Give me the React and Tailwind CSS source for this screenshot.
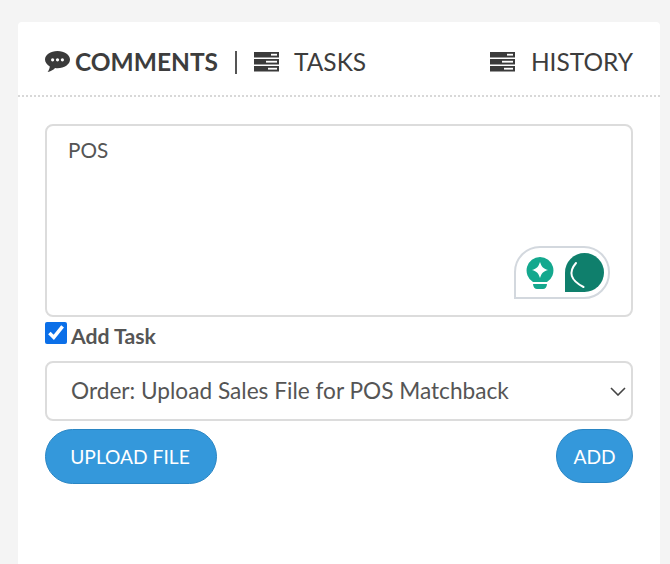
import React from 'react';

const ListIcon = () => (
    <svg width="25" height="20" viewBox="0 0 25 20" className="shrink-0">
        <rect x="0" y="0" width="25" height="5.5" fill="#3a3a3a" />
        <rect x="0" y="7" width="25" height="5.5" fill="#3a3a3a" />
        <rect x="0" y="14" width="25" height="5.5" fill="#3a3a3a" />
        <rect x="17" y="1.8" width="6" height="1.8" fill="#fff" />
        <rect x="12" y="8.8" width="11" height="1.8" fill="#fff" />
        <rect x="14" y="15.8" width="9" height="1.8" fill="#fff" />
    </svg>
);

const CommentIcon = () => (
    <svg width="25" height="22" viewBox="0 0 25 22" className="shrink-0">
        <path d="M12.5 0C5.6 0 0 3.8 0 8.6c0 2.8 1.9 5.2 4.8 6.8-.2 1.8-.9 3.8-2.2 5.6 2.9-.4 5.6-1.9 7.5-3.9.8.1 1.6.2 2.4.2 6.9 0 12.5-3.9 12.5-8.7S19.4 0 12.5 0z" fill="#3a3a3a" />
        <circle cx="7.6" cy="8.8" r="1.6" fill="#fff" />
        <circle cx="12.5" cy="8.8" r="1.6" fill="#fff" />
        <circle cx="17.4" cy="8.8" r="1.6" fill="#fff" />
    </svg>
);

const WritingWidget = () => (
    <div className="absolute left-[496px] top-[224px] w-[96px] h-[53px] bg-white border-2 border-[#d3d8de] rounded-t-[26px] rounded-br-[26px] flex items-center gap-[11px] pl-[10px]">
        <svg width="28" height="32" viewBox="0 0 28 32" className="shrink-0">
            <path d="M14 0a13.5 13.5 0 0 0-7 25h14A13.5 13.5 0 0 0 14 0z" fill="#14a88e" />
            <path d="M14 5c1.500 4.600 3 6.500 8 8-5 1.500-6.500 3.400-8 8-1.500-4.600-3-6.500-8-8 5-1.500 6.500-3.400 8-8z" fill="#fff" />
            <path d="M7 27h14c0 3-2 5-4 5h-6c-2 0-4-2-4-5z" fill="#14a88e" />
        </svg>
        <svg width="39" height="39" viewBox="0 0 39 39" className="shrink-0">
            <path d="M0 39V19.500A19.500 19.500 0 1 1 19.500 39z" fill="#0f7f6c" />
            <path d="M11 10Q-1 24 18.500 34" fill="none" stroke="#fff" strokeWidth="2" strokeLinecap="round" />
        </svg>
    </div>
);

const App = () => {
    return (
        <div className="w-[670px] h-[564px] overflow-hidden bg-[#f4f4f4] pt-[22px] pl-[18px] pr-[10px] font-['Lato','Open_Sans',sans-serif] text-[#3d3d3d]">
            <div className="relative h-[542px] bg-white rounded-t-[4px]">
                <div className="h-[75px] border-b-2 border-dotted border-[#d8d8d8] pl-[27px] pr-[27px] pt-[24px] flex items-start justify-between">
                    <div className="flex items-center h-[32px] text-[24.5px] leading-[32px]">
                        <CommentIcon />
                        <span className="ml-[5px] font-bold text-[#3d3d3d]">COMMENTS</span>
                        <span className="ml-[17px] w-[2px] h-[23px] bg-[#555]"></span>
                        <span className="ml-[17px]"><ListIcon /></span>
                        <span className="ml-[15px]">TASKS</span>
                    </div>
                    <div className="flex items-center h-[32px] text-[24.5px] leading-[32px]">
                        <ListIcon />
                        <span className="ml-[16px]">HISTORY</span>
                    </div>
                </div>

                <div className="px-[27px] pt-[27px]">
                    <textarea
                        defaultValue="POS"
                        className="block w-[588px] h-[193px] resize-none border-2 border-[#dcdcdc] rounded-[8px] px-[21px] py-[10px] text-[20.7px] leading-[28px] text-[#555] outline-none"
                    />
                    <label className="flex items-center h-[24px] mt-[5px] text-[21.2px] font-bold text-[#555]">
                        <input type="checkbox" defaultChecked className="w-[22px] h-[22px] m-0 mb-[2px] accent-[#0b6fe8]" />
                        <span className="ml-[4px] leading-[24px] mt-[3px]">Add Task</span>
                    </label>
                    <div className="relative mt-[15px] w-[588px]">
                        <select className="block w-full h-[60px] appearance-none bg-white border-2 border-[#dcdcdc] rounded-[8px] pl-[24px] pr-[40px] text-[22.65px] text-[#555] outline-none">
                            <option>Order: Upload Sales File for POS Matchback</option>
                        </select>
                        <svg width="16" height="9" viewBox="0 0 16 9" className="absolute right-[7px] top-[26px]">
                            <path d="M1 1l7 7 7-7" fill="none" stroke="#444" strokeWidth="1.600" />
                        </svg>
                    </div>
                    <div className="flex justify-between items-start mt-[8px]">
                        <button className="w-[172px] h-[55px] pt-[2px] pr-[2px] rounded-full bg-[#3498db] border border-[#2a86c4] text-white text-[19.200px]">UPLOAD FILE</button>
                        <button className="w-[77px] h-[54px] pt-[2px] rounded-full bg-[#3498db] border border-[#2a86c4] text-white text-[19.200px]">ADD</button>
                    </div>
                </div>

                <WritingWidget />
            </div>
        </div>
    );
};

export default App;
